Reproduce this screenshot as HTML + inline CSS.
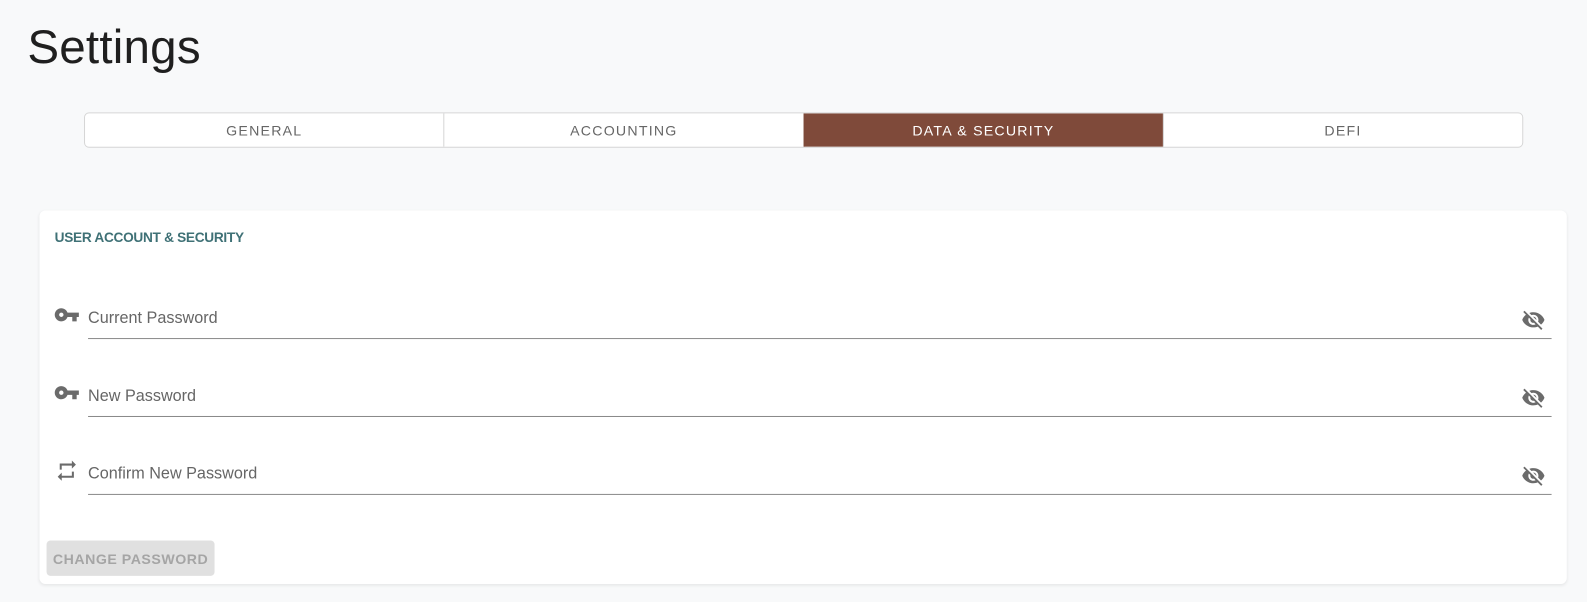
<!DOCTYPE html>
<html><head><style>
body{margin:0;width:1587px;height:602px;background:#f8f9fa;font-family:"Liberation Sans",Roboto,sans-serif;overflow:hidden}
#w{position:relative;width:1568px;height:595px;transform:scale(1.01212);transform-origin:0 0}
h1{position:absolute;left:27px;top:18px;margin:0;font-size:47px;font-weight:400;color:#1f1f1f;letter-spacing:.2px}
.tabs{position:absolute;left:83px;top:111px;width:1420px;height:33px;border:1px solid #d6d6d6;border-radius:5px;background:#fff;display:flex;overflow:hidden}
.tabs div{flex:1;display:flex;align-items:center;justify-content:center;font-size:14px;letter-spacing:1.2px;color:#666;border-left:1px solid #d6d6d6}
.tabs div:first-child{border-left:none}
.tabs .act{background:#7f4a3a;color:#fff;border-color:#7f4a3a}
.card{position:absolute;left:39px;top:208px;width:1509px;height:369px;background:#fff;border-radius:6px;box-shadow:0 1px 3px rgba(0,0,0,.08)}
.title{position:absolute;left:15px;top:19px;font-size:13.5px;font-weight:700;color:#3f7176;letter-spacing:-.3px}
.f{position:absolute;left:48px;width:1446px;height:0;border-top:1px solid #8a8a8a}
.lab{position:absolute;left:48px;font-size:16px;color:#666}
svg{position:absolute;fill:#6b6b6b}
.btn{position:absolute;left:7px;top:326px;width:166px;height:35px;background:#e0e0e0;border-radius:4px;color:#a5a5a5;font-size:14px;font-weight:700;letter-spacing:.5px;display:flex;align-items:center;justify-content:center}
</style></head><body><div id="w">
<h1>Settings</h1>
<div class="tabs"><div>GENERAL</div><div>ACCOUNTING</div><div class="act">DATA &amp; SECURITY</div><div>DEFI</div></div>
<div class="card">
<div class="title">USER ACCOUNT &amp; SECURITY</div>

<svg style="left:14px;top:90px" width="26" height="26" viewBox="0 0 24 24"><path d="M12.65 10C11.83 7.67 9.61 6 7 6c-3.31 0-6 2.69-6 6s2.69 6 6 6c2.61 0 4.83-1.67 5.65-4H17v4h4v-4h2v-4H12.65zM7 14c-1.1 0-2-.9-2-2s.9-2 2-2 2 .9 2 2-.9 2-2 2z"/></svg>
<div class="lab" style="top:98px">Current Password</div>
<div class="f" style="top:126px"></div>
<svg style="left:1464px;top:96px" width="24" height="24" viewBox="0 0 24 24"><path d="M12 7c2.76 0 5 2.24 5 5 0 .65-.13 1.26-.36 1.83l2.92 2.92c1.51-1.26 2.7-2.89 3.43-4.75-1.73-4.39-6-7.5-11-7.5-1.4 0-2.74.25-3.98.7l2.16 2.16C10.74 7.13 11.35 7 12 7zM2 4.27l2.28 2.28.46.46C3.08 8.3 1.78 10.02 1 12c1.73 4.39 6 7.5 11 7.5 1.55 0 3.03-.3 4.38-.84l.42.42L19.73 22 21 20.73 3.27 3 2 4.27zM7.53 9.8l1.55 1.55c-.05.21-.08.43-.08.65 0 1.66 1.34 3 3 3 .22 0 .44-.03.65-.08l1.55 1.55c-.67.33-1.41.53-2.2.53-2.76 0-5-2.24-5-5 0-.79.2-1.53.53-2.2zm4.31-.78l3.15 3.15.02-.16c0-1.66-1.34-3-3-3l-.17.01z"/></svg>

<svg style="left:14px;top:167px" width="26" height="26" viewBox="0 0 24 24"><path d="M12.65 10C11.83 7.67 9.61 6 7 6c-3.31 0-6 2.69-6 6s2.69 6 6 6c2.61 0 4.83-1.67 5.65-4H17v4h4v-4h2v-4H12.65zM7 14c-1.1 0-2-.9-2-2s.9-2 2-2 2 .9 2 2-.9 2-2 2z"/></svg>
<div class="lab" style="top:175px">New Password</div>
<div class="f" style="top:203px"></div>
<svg style="left:1464px;top:173px" width="24" height="24" viewBox="0 0 24 24"><path d="M12 7c2.76 0 5 2.24 5 5 0 .65-.13 1.26-.36 1.83l2.92 2.92c1.51-1.26 2.7-2.89 3.43-4.75-1.73-4.39-6-7.5-11-7.5-1.4 0-2.74.25-3.98.7l2.16 2.16C10.74 7.13 11.35 7 12 7zM2 4.27l2.28 2.28.46.46C3.08 8.3 1.78 10.02 1 12c1.73 4.39 6 7.5 11 7.5 1.55 0 3.03-.3 4.38-.84l.42.42L19.73 22 21 20.73 3.27 3 2 4.27zM7.53 9.8l1.55 1.55c-.05.21-.08.43-.08.65 0 1.66 1.34 3 3 3 .22 0 .44-.03.65-.08l1.55 1.55c-.67.33-1.41.53-2.2.53-2.76 0-5-2.24-5-5 0-.79.2-1.53.53-2.2zm4.31-.78l3.15 3.15.02-.16c0-1.66-1.34-3-3-3l-.17.01z"/></svg>

<svg style="left:15px;top:245px" width="24" height="24" viewBox="0 0 24 24"><path d="M7 7h10v3l4-4-4-4v3H5v6h2V7zm10 10H7v-3l-4 4 4 4v-3h12v-6h-2v4z"/></svg>
<div class="lab" style="top:252px">Confirm New Password</div>
<div class="f" style="top:280px"></div>
<svg style="left:1464px;top:250px" width="24" height="24" viewBox="0 0 24 24"><path d="M12 7c2.76 0 5 2.24 5 5 0 .65-.13 1.26-.36 1.83l2.92 2.92c1.51-1.26 2.7-2.89 3.43-4.75-1.73-4.39-6-7.5-11-7.5-1.4 0-2.74.25-3.980.7l2.16 2.16C10.74 7.13 11.35 7 12 7zM2 4.27l2.28 2.28.46.46C3.08 8.3 1.78 10.02 1 12c1.73 4.39 6 7.5 11 7.5 1.55 0 3.03-.3 4.38-.84l.42.42L19.73 22 21 20.73 3.27 3 2 4.27zM7.53 9.8l1.55 1.55c-.05.21-.08.43-.08.65 0 1.66 1.34 3 3 3 .22 0 .44-.03.65-.08l1.55 1.55c-.67.33-1.41.53-2.2.53-2.76 0-5-2.24-5-5 0-.79.2-1.53.53-2.2zm4.31-.78l3.15 3.15.02-.16c0-1.66-1.34-3-3-3l-.17.01z"/></svg>

<div class="btn">CHANGE PASSWORD</div>
</div>
</div></body></html>
